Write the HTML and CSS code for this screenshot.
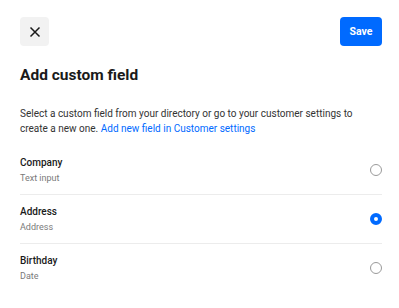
FILE: index.html
```html
<!DOCTYPE html>
<html lang="en">
<head>
    <meta charset="UTF-8">
    <meta name="viewport" content="width=device-width, initial-scale=1.0">
    <title>Add custom field</title>
    <link rel="stylesheet" href="styles.css">
</head>
<body>
    <div class="sheet">
        <div class="topbar">
            <button class="close-btn" aria-label="Close">
                <svg width="12" height="12" viewBox="0 0 12 12">
                    <path d="M1.5 1.5 L10.5 10.5 M10.5 1.5 L1.5 10.5" stroke="#1a1a1a" stroke-width="1.5" fill="none"/>
                </svg>
            </button>
            <button class="save-btn">Save</button>
        </div>

        <h1>Add custom field</h1>

        <p class="intro">
            <span>Select a custom field from your directory or go to your customer settings to</span><br>
            <span>create a new one.</span> <a href="#">Add new field in Customer settings</a>
        </p>

        <ul class="fields">
            <li class="field">
                <div>
                    <div class="field-name">Company</div>
                    <div class="field-type">Text input</div>
                </div>
                <span class="radio"></span>
            </li>
            <li class="field">
                <div>
                    <div class="field-name">Address</div>
                    <div class="field-type">Address</div>
                </div>
                <span class="radio checked"></span>
            </li>
            <li class="field">
                <div>
                    <div class="field-name">Birthday</div>
                    <div class="field-type">Date</div>
                </div>
                <span class="radio"></span>
            </li>
        </ul>
    </div>
</body>
</html>
```

FILE: styles.css
```css
body {
    margin: 0;
    background: white;
    font-family: Roboto, "Liberation Sans", sans-serif;
    color: #1a1a1a;
}
.sheet {
    padding: 17px 17px 0 20px;
}
.topbar {
    display: flex;
    justify-content: space-between;
    align-items: center;
}
.close-btn {
    width: 29px;
    height: 29px;
    border: none;
    border-radius: 4px;
    background: #f2f2f2;
    display: flex;
    align-items: center;
    justify-content: center;
    padding: 0;
}
.save-btn {
    width: 42px;
    height: 29px;
    border: none;
    border-radius: 4px;
    background: #006aff;
    color: white;
    font-family: inherit;
    font-weight: 700;
    font-size: 10.5px;
    padding: 0;
}
h1 {
    margin: 18px 0 0;
    font-size: 15.5px;
    font-weight: 700;
    line-height: 22px;
}
.intro {
    margin: 20px 0 0;
    font-size: 10px;
    line-height: 15px;
    color: #333;
}
.intro a {
    color: #006aff;
    text-decoration: none;
}
.fields {
    list-style: none;
    margin: 10px 0 0;
    padding: 0;
}
.field {
    display: flex;
    align-items: center;
    justify-content: space-between;
    height: 48px;
    border-bottom: 1px solid #ececec;
}
.field:last-child {
    border-bottom: none;
}
.field-name {
    font-size: 10px;
    font-weight: 500;
    line-height: 15px;
}
.field-type {
    font-size: 9px;
    color: #7a7a7a;
    line-height: 15px;
    margin-top: 1px;
}
.radio {
    width: 10px;
    height: 10px;
    border: 1.2px solid #9a9a9a;
    border-radius: 50%;
}
.radio.checked {
    border: 4px solid #006aff;
    width: 4px;
    height: 4px;
    background: white;
}
```
